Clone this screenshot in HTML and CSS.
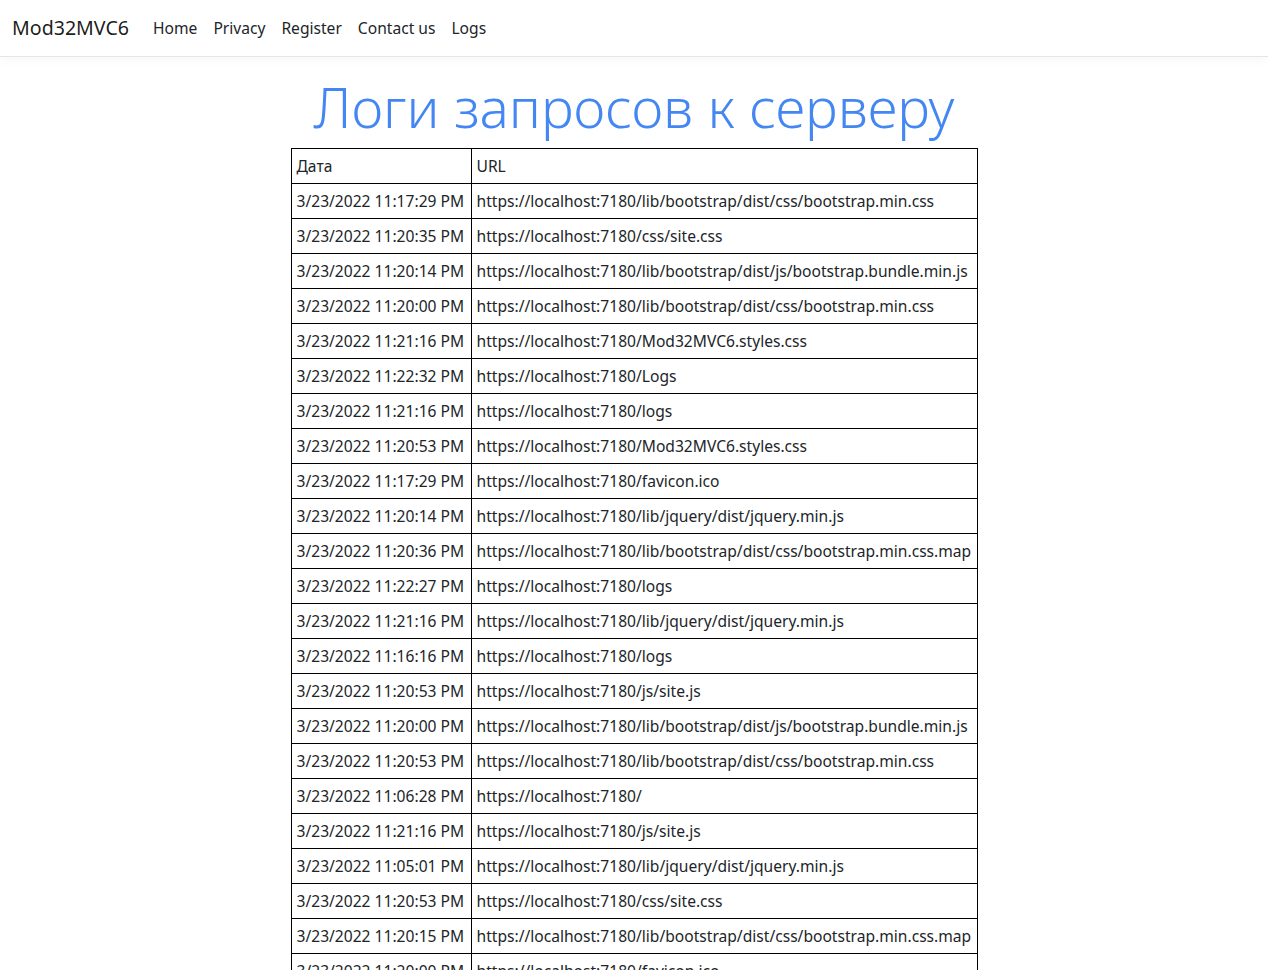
FILE: index.html
```html
<!DOCTYPE html>
<html lang="ru">
<head>
<meta charset="utf-8">
<title>Logs - Mod32MVC6</title>
<link rel="stylesheet" href="styles.css">
</head>
<body>
<header class="navbar">
  <a class="brand" href="#">Mod32MVC6</a>
  <nav class="nav">
    <a class="nav-link" href="#">Home</a>
    <a class="nav-link" href="#">Privacy</a>
    <a class="nav-link" href="#">Register</a>
    <a class="nav-link" href="#">Contact us</a>
    <a class="nav-link" href="#">Logs</a>
  </nav>
</header>
<main class="main">
  <h1 class="title">Логи запросов к серверу</h1>
  <table class="logs">
    <colgroup><col class="c-date"><col class="c-url"></colgroup>
    <tr><td>Дата</td><td>URL</td></tr>
    <tr><td>3/23/2022 11:17:29 PM</td><td>https://localhost:7180/lib/bootstrap/dist/css/bootstrap.min.css</td></tr>
    <tr><td>3/23/2022 11:20:35 PM</td><td>https://localhost:7180/css/site.css</td></tr>
    <tr><td>3/23/2022 11:20:14 PM</td><td>https://localhost:7180/lib/bootstrap/dist/js/bootstrap.bundle.min.js</td></tr>
    <tr><td>3/23/2022 11:20:00 PM</td><td>https://localhost:7180/lib/bootstrap/dist/css/bootstrap.min.css</td></tr>
    <tr><td>3/23/2022 11:21:16 PM</td><td>https://localhost:7180/Mod32MVC6.styles.css</td></tr>
    <tr><td>3/23/2022 11:22:32 PM</td><td>https://localhost:7180/Logs</td></tr>
    <tr><td>3/23/2022 11:21:16 PM</td><td>https://localhost:7180/logs</td></tr>
    <tr><td>3/23/2022 11:20:53 PM</td><td>https://localhost:7180/Mod32MVC6.styles.css</td></tr>
    <tr><td>3/23/2022 11:17:29 PM</td><td>https://localhost:7180/favicon.ico</td></tr>
    <tr><td>3/23/2022 11:20:14 PM</td><td>https://localhost:7180/lib/jquery/dist/jquery.min.js</td></tr>
    <tr><td>3/23/2022 11:20:36 PM</td><td>https://localhost:7180/lib/bootstrap/dist/css/bootstrap.min.css.map</td></tr>
    <tr><td>3/23/2022 11:22:27 PM</td><td>https://localhost:7180/logs</td></tr>
    <tr><td>3/23/2022 11:21:16 PM</td><td>https://localhost:7180/lib/jquery/dist/jquery.min.js</td></tr>
    <tr><td>3/23/2022 11:16:16 PM</td><td>https://localhost:7180/logs</td></tr>
    <tr><td>3/23/2022 11:20:53 PM</td><td>https://localhost:7180/js/site.js</td></tr>
    <tr><td>3/23/2022 11:20:00 PM</td><td>https://localhost:7180/lib/bootstrap/dist/js/bootstrap.bundle.min.js</td></tr>
    <tr><td>3/23/2022 11:20:53 PM</td><td>https://localhost:7180/lib/bootstrap/dist/css/bootstrap.min.css</td></tr>
    <tr><td>3/23/2022 11:06:28 PM</td><td>https://localhost:7180/</td></tr>
    <tr><td>3/23/2022 11:21:16 PM</td><td>https://localhost:7180/js/site.js</td></tr>
    <tr><td>3/23/2022 11:05:01 PM</td><td>https://localhost:7180/lib/jquery/dist/jquery.min.js</td></tr>
    <tr><td>3/23/2022 11:20:53 PM</td><td>https://localhost:7180/css/site.css</td></tr>
    <tr><td>3/23/2022 11:20:15 PM</td><td>https://localhost:7180/lib/bootstrap/dist/css/bootstrap.min.css.map</td></tr>
    <tr><td>3/23/2022 11:20:00 PM</td><td>https://localhost:7180/favicon.ico</td></tr>
    <tr><td>3/23/2022 11:17:29 PM</td><td>https://localhost:7180/Logs</td></tr>
  </table>
</main>
</body>
</html>
```

FILE: styles.css
```css
* { box-sizing: border-box; }
html, body { margin: 0; padding: 0; }
body {
  font-family: "Noto Sans", "Open Sans", sans-serif;
  font-size: 15.6px;
  line-height: 24px;
  color: #212529;
  background: #fff;
}
.navbar {
  display: flex;
  align-items: center;
  height: 57px;
  padding: 0 12px;
  border-bottom: 1px solid #e5e5e5;
  box-shadow: 0 0.25rem 0.75rem rgba(0,0,0,.03);
}
.brand {
  font-size: 19.6px;
  color: rgba(0,0,0,.9);
  text-decoration: none;
  margin-right: 16px;
  line-height: 30px;
}
.nav { display: flex; }
.nav-link {
  color: #212529;
  text-decoration: none;
  padding: 8px;
}
.main {
  display: flex;
  flex-direction: column;
  align-items: center;
  padding-top: 16px;
}
.title {
  margin: 0 0 8px;
  font-size: 55px;
  font-weight: 300;
  line-height: 67px;
  color: #4487f3;
}
.logs {
  border-collapse: collapse;
  table-layout: fixed;
  width: 686px;
}
.c-date { width: 180px; }
.c-url { width: 506px; }
.logs td {
  border: 1px solid #000;
  padding: 5px;
  height: 35px;
  white-space: nowrap;
  overflow: hidden;
  text-align: left;
  vertical-align: middle;
}
```
